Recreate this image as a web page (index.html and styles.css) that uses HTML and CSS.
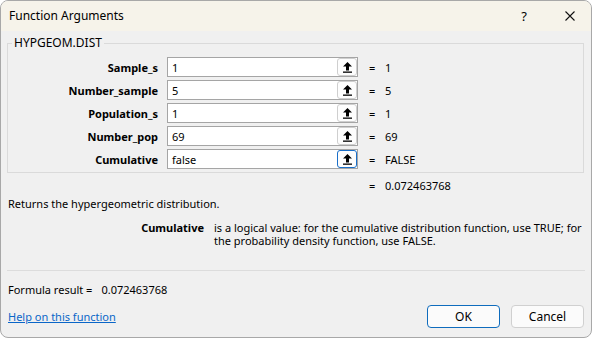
FILE: index.html
```html
<!DOCTYPE html>
<html>
<head>
<meta charset="utf-8">
<link rel="stylesheet" href="styles.css">
</head>
<body>
<div class="dialog">
  <div class="titlebar">
    <span class="title">Function Arguments</span>
    <span class="help">?</span>
    <span class="close"><svg width="10" height="10" viewBox="0 0 10 10"><path d="M0.5 0.5 L9.5 9.5 M9.5 0.5 L0.5 9.5" stroke="#111" stroke-width="1.1" fill="none"/></svg></span>
  </div>
  <fieldset class="group">
    <legend>HYPGEOM.DIST</legend>
    <div class="args">
      <div class="row">
        <label class="lbl">Sample_s</label>
        <div class="field"><span class="val">1</span><span class="pick"><svg width="11" height="12" viewBox="0 0 11 12"><path d="M5.5 1 L10 5.5 H7 V9.5 H4 V5.5 H1 Z" fill="#000"/><rect x="1" y="10.5" width="9" height="1.3" fill="#000"/></svg></span></div>
        <span class="eq">=</span><span class="res">1</span>
      </div>
      <div class="row">
        <label class="lbl">Number_sample</label>
        <div class="field"><span class="val">5</span><span class="pick"><svg width="11" height="12" viewBox="0 0 11 12"><path d="M5.5 1 L10 5.5 H7 V9.5 H4 V5.5 H1 Z" fill="#000"/><rect x="1" y="10.5" width="9" height="1.3" fill="#000"/></svg></span></div>
        <span class="eq">=</span><span class="res">5</span>
      </div>
      <div class="row">
        <label class="lbl">Population_s</label>
        <div class="field"><span class="val">1</span><span class="pick"><svg width="11" height="12" viewBox="0 0 11 12"><path d="M5.5 1 L10 5.5 H7 V9.5 H4 V5.5 H1 Z" fill="#000"/><rect x="1" y="10.5" width="9" height="1.3" fill="#000"/></svg></span></div>
        <span class="eq">=</span><span class="res">1</span>
      </div>
      <div class="row">
        <label class="lbl">Number_pop</label>
        <div class="field"><span class="val">69</span><span class="pick"><svg width="11" height="12" viewBox="0 0 11 12"><path d="M5.5 1 L10 5.5 H7 V9.5 H4 V5.5 H1 Z" fill="#000"/><rect x="1" y="10.5" width="9" height="1.3" fill="#000"/></svg></span></div>
        <span class="eq">=</span><span class="res">69</span>
      </div>
      <div class="row">
        <label class="lbl">Cumulative</label>
        <div class="field"><span class="val">false</span><span class="pick focus"><svg width="11" height="12" viewBox="0 0 11 12"><path d="M5.5 1 L10 5.5 H7 V9.5 H4 V5.5 H1 Z" fill="#000"/><rect x="1" y="10.5" width="9" height="1.3" fill="#000"/></svg></span></div>
        <span class="eq">=</span><span class="res">FALSE</span>
      </div>
    </div>
  </fieldset>
  <div class="total"><span class="eq">=</span><span class="res">0.072463768</span></div>
  <p class="summary">Returns the hypergeometric distribution.</p>
  <div class="argdesc">
    <span class="argname">Cumulative</span>
    <span class="argtext">is a logical value: for the cumulative distribution function, use TRUE; for the probability density function, use FALSE.</span>
  </div>
  <div class="sep"></div>
  <div class="formula"><span>Formula result =</span><span class="fval">0.072463768</span></div>
  <div class="footer">
    <a class="link" href="#">Help on this function</a>
    <div class="buttons">
      <button class="btn primary">OK</button>
      <button class="btn">Cancel</button>
    </div>
  </div>
</div>
</body>
</html>
```
FILE: styles.css
```css
html, body {
  margin: 0;
  padding: 0;
  background: #ffffff;
}
body {
  font-family: "Noto Sans", "Open Sans", sans-serif;
  font-size: 11px;
  color: #000;
}
.dialog {
  width: 592px;
  height: 338px;
  box-sizing: border-box;
  border: 1px solid #a8a8a8;
  border-radius: 8px;
  background: #f0f0f0;
  overflow: hidden;
  display: flex;
  flex-direction: column;
}
.titlebar {
  height: 30px;
  flex: none;
  background: #f6f3ea;
  display: flex;
  align-items: center;
  padding-left: 8px;
  font-size: 12px;
}
.title {
  flex: 1;
  line-height: 16px;
}
.help {
  width: 12px;
  text-align: center;
  margin-right: 35px;
  font-size: 13px;
}
.close {
  display: flex;
  margin-right: 16px;
}
.group {
  margin: 4px 7px 0 6px;
  padding: 0 0 3px 0;
  border: 1px solid #dadada;
  min-width: 0;
}
.group legend {
  margin-left: 4px;
  padding: 0 2px;
  line-height: 16px;
  font-size: 12px;
}
.args {
  display: flex;
  flex-direction: column;
  gap: 3px;
  padding-top: 6px;
}
.row {
  display: flex;
  align-items: center;
  height: 20px;
}
.lbl {
  width: 150px;
  text-align: right;
  font-weight: bold;
  flex: none;
}
.field {
  margin-left: 9px;
  width: 191px;
  height: 20px;
  box-sizing: border-box;
  border: 1px solid #a5a5a5;
  background: #fff;
  display: flex;
  align-items: center;
  padding-left: 4px;
}
.val {
  flex: 1;
}
.pick {
  width: 20px;
  height: 18px;
  box-sizing: border-box;
  border: 1px solid #cfcfcf;
  border-radius: 3px;
  background: #fdfdfd;
  display: flex;
  align-items: center;
  justify-content: center;
}
.pick.focus {
  border-color: #1a6fc9;
}
.eq {
  width: 16px;
  margin-left: 11px;
  flex: none;
}
.res {
  flex: none;
}
.total {
  display: flex;
  padding-left: 357px;
  margin-top: 5px;
  line-height: 16px;
}
.summary {
  margin: 2px 0 0 7px;
  line-height: 16px;
}
.argdesc {
  display: flex;
  margin-top: 9px;
  line-height: 13px;
}
.argname {
  width: 203px;
  text-align: right;
  font-weight: bold;
  flex: none;
}
.argtext {
  margin-left: 10px;
  width: 370px;
}
.sep {
  margin: 23px 6px 0 6px;
  height: 1px;
  background: #dcdcdc;
}
.formula {
  margin: 11px 0 0 7px;
  display: flex;
  line-height: 16px;
}
.fval {
  margin-left: 9px;
}
.footer {
  display: flex;
  align-items: center;
  justify-content: space-between;
  margin-top: 7px;
  padding: 0 7px 0 7px;
}
.link {
  color: #0a66c8;
  text-decoration: underline;
}
.buttons {
  display: flex;
  gap: 11px;
}
.btn {
  width: 73px;
  height: 23px;
  box-sizing: border-box;
  border: 1px solid #d0d0d0;
  border-radius: 4px;
  background: #fbfbfb;
  font-family: inherit;
  font-size: 12px;
  color: #000;
  padding: 0;
}
.btn.primary {
  border-color: #0f6cbd;
}
```
